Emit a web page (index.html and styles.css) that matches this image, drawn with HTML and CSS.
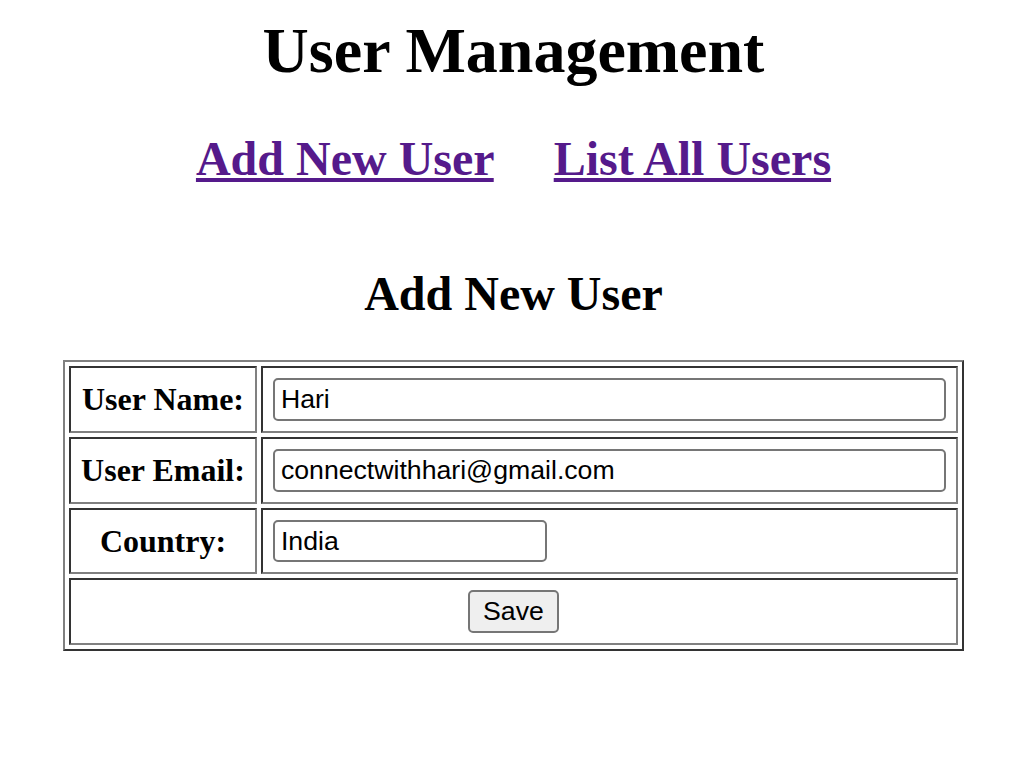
FILE: index.html
```html
<!DOCTYPE html>
<html>
<head>
<meta charset="utf-8">
<title>User Management</title>
<link rel="stylesheet" href="styles.css">
</head>
<body>
<div class="page">
  <h1 class="title">User Management</h1>
  <h2 class="nav"><a class="nav-link" href="#">Add New User</a> &nbsp;&nbsp;&nbsp; <a class="nav-link" href="#">List All Users</a></h2>
  <div class="form-wrap">
    <table class="user-form">
      <caption><h2 class="caption-title">Add New User</h2></caption>
      <tr>
        <th class="label">User Name:</th>
        <td class="field"><input class="text-input wide" type="text" value="Hari"></td>
      </tr>
      <tr>
        <th class="label">User Email:</th>
        <td class="field"><input class="text-input wide" type="text" value="connectwithhari@gmail.com"></td>
      </tr>
      <tr>
        <th class="label">Country:</th>
        <td class="field"><input class="text-input narrow" type="text" value="India"></td>
      </tr>
      <tr>
        <td class="actions" colspan="2"><button class="save-btn" type="button">Save</button></td>
      </tr>
    </table>
  </div>
</div>
</body>
</html>
```
FILE: styles.css
```css
html, body {
  margin: 0;
  padding: 0;
  background: #ffffff;
}
body {
  font-family: "Liberation Serif", "Times New Roman", serif;
  color: #000000;
}
.page {
  padding: 14px 16px 16px;
  text-align: center;
}
.title {
  font-size: 64px;
  font-weight: bold;
  margin: 0 0 42.88px;
}
.nav {
  font-size: 48px;
  font-weight: bold;
  margin: 0 0 39.84px;
}
.nav-link {
  color: #551a8b;
  text-decoration: underline;
}
.form-wrap {
  display: flex;
  justify-content: center;
}
.user-form {
  border-collapse: separate;
  border-spacing: 4px;
  border-style: solid;
  border-width: 2px;
  border-color: #808080 #333333 #333333 #808080;
}
.user-form caption {
  text-align: center;
}
.caption-title {
  font-size: 48px;
  font-weight: bold;
  margin: 39.84px 0;
}
.label,
.field,
.actions {
  border-style: solid;
  border-width: 2px;
  border-color: #333333 #808080 #808080 #333333;
  padding: 10px;
}
.label {
  font-size: 32px;
  font-weight: bold;
  text-align: center;
  white-space: nowrap;
}
.field {
  text-align: left;
}
.actions {
  text-align: center;
}
.text-input {
  box-sizing: border-box;
  display: block;
  height: 42.67px;
  margin: 0;
  padding: 0 6px;
  font-family: "Liberation Sans", Arial, sans-serif;
  font-size: 26.67px;
  color: #000000;
  border: 2px solid #767676;
  border-radius: 5px;
  background: #ffffff;
}
.wide {
  width: 673px;
}
.narrow {
  width: 274px;
}
.save-btn {
  box-sizing: border-box;
  display: inline-block;
  height: 42.67px;
  width: 91px;
  margin: 0;
  padding: 0;
  font-family: "Liberation Sans", Arial, sans-serif;
  font-size: 26.67px;
  color: #000000;
  background: #efefef;
  border: 2px solid #767676;
  border-radius: 5px;
  vertical-align: middle;
}
```
